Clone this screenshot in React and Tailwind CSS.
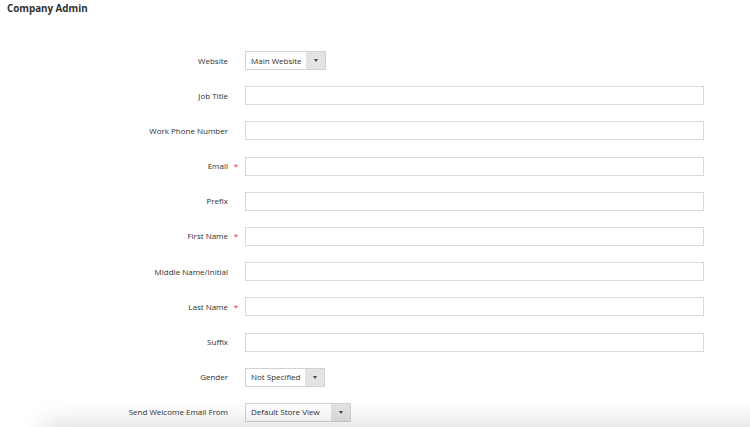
import React from 'react'

const rows = [
  { label: "Website", type: "select", value: "Main Website", w: "w-[81px]" },
  { label: "Job Title" },
  { label: "Work Phone Number" },
  { label: "Email", required: true },
  { label: "Prefix" },
  { label: "First Name", required: true },
  { label: "Middle Name/Initial" },
  { label: "Last Name", required: true },
  { label: "Suffix" },
  { label: "Gender", type: "select", value: "Not Specified", w: "w-[80px]" },
  { label: "Send Welcome Email From", type: "select", value: "Default Store View", w: "w-[106px]" },
]

function Select({ value, w }) {
  return (
    <div className={`flex h-[19px] border border-[#d2d2d2] bg-white ${w}`}>
      <div className="flex-1 flex items-center pl-[5px] text-[8px] text-[#303030] whitespace-nowrap">{value}</div>
      <div className="w-[19px] bg-[#e3e3e3] flex items-center justify-center">
        <div className="w-0 h-0 border-l-[2.5px] border-r-[2.5px] border-t-[3px] border-l-transparent border-r-transparent border-t-[#444]"></div>
      </div>
    </div>
  )
}

export default function App() {
  return (
    <div className="relative h-[427px] overflow-hidden bg-white" style={{ fontFamily: '"Open Sans", sans-serif' }}>
      <h2 className="pl-[7px] pt-[1px] text-[9.8px] font-bold text-[#303030] leading-[16px]">Company Admin</h2>

      <div className="mt-[34px] flex flex-col gap-[16.2px]">
        {rows.map((row) => (
          <div key={row.label} className="flex items-center h-[19px]">
            <label className="w-[228px] text-right text-[8px] text-[#303030] whitespace-nowrap">{row.label}</label>
            <div className="w-[17px] flex justify-center pr-[1px]">
              {row.required && <span className="text-[#e22626] text-[8px] leading-none">*</span>}
            </div>
            {row.type === "select" ? (
              <Select value={row.value} w={row.w} />
            ) : (
              <input type="text" className="w-[459px] h-[19px] border border-[#d9d9d9] bg-white outline-none" />
            )}
          </div>
        ))}
      </div>

      {/* sticky footer shadow */}
      <div className="pointer-events-none absolute left-[40px] right-[-40px] bottom-[-24px] h-[24px] rounded-l-[60px] bg-white shadow-[0_-6px_24px_rgba(0,0,0,0.13)]"></div>
    </div>
  )
}
